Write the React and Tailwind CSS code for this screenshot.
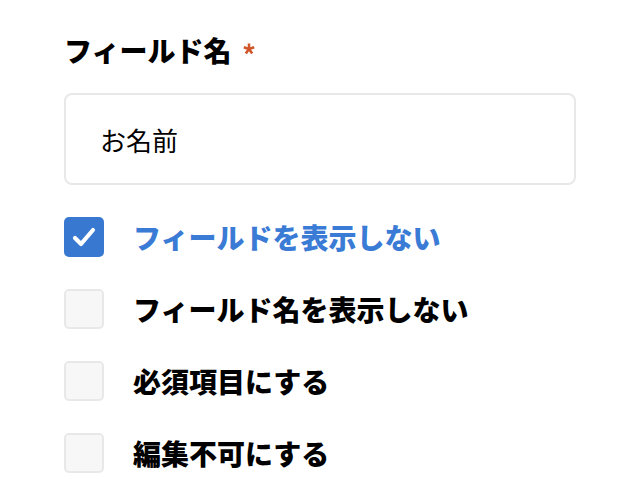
import React from "react";

function Box({ checked }) {
  if (checked) {
    return (
      <div className="w-10 h-10 rounded-[5px] bg-[#3878d0] shrink-0">
        <svg width="40" height="40" viewBox="0 0 40 40" fill="none" stroke="white" strokeWidth="4.2" strokeLinecap="round" strokeLinejoin="round">
          <path d="M11 21l6 6L29 13" />
        </svg>
      </div>
    );
  }
  return <div className="w-10 h-10 rounded-[5px] bg-[#f7f7f7] border-2 border-[#e8e8e8] shrink-0" />;
}

const items = [
  { label: "フィールドを表示しない", checked: true },
  { label: "フィールド名を表示しない", checked: false },
  { label: "必須項目にする", checked: false },
  { label: "編集不可にする", checked: false },
];

export default function App() {
  return (
    <div className="w-[640px] h-[502px] bg-white px-16 pt-[34px] font-['Noto_Sans_CJK_JP',sans-serif]">
      <div className="flex items-center h-8 mb-[27px]">
        <span className="text-[28px] leading-8 font-black text-black">フィールド名</span>
        <svg className="ml-[12px] mb-[2px]" width="12" height="12" viewBox="0 0 12 12" fill="none" stroke="#d0562a" strokeWidth="2.6" strokeLinecap="butt">
          <path d="M6 6V0.5" />
          <path d="M6 6L11.2 4.3" />
          <path d="M6 6L9.2 10.5" />
          <path d="M6 6L2.8 10.5" />
          <path d="M6 6L0.8 4.3" />
        </svg>
      </div>
      <div className="h-[92px] border-2 border-[#e8e8e8] rounded-[8px] flex items-center pl-[34px]">
        <span className="text-[26px] text-black">お名前</span>
      </div>
      <div className="mt-8 flex flex-col gap-8">
        {items.map((it) => (
          <div key={it.label} className="flex items-center h-10 gap-[29px]">
            <Box checked={it.checked} />
            <span className={"text-[28px] font-black " + (it.checked ? "text-[#3a7bd5]" : "text-black")}>
              {it.label}
            </span>
          </div>
        ))}
      </div>
    </div>
  );
}
